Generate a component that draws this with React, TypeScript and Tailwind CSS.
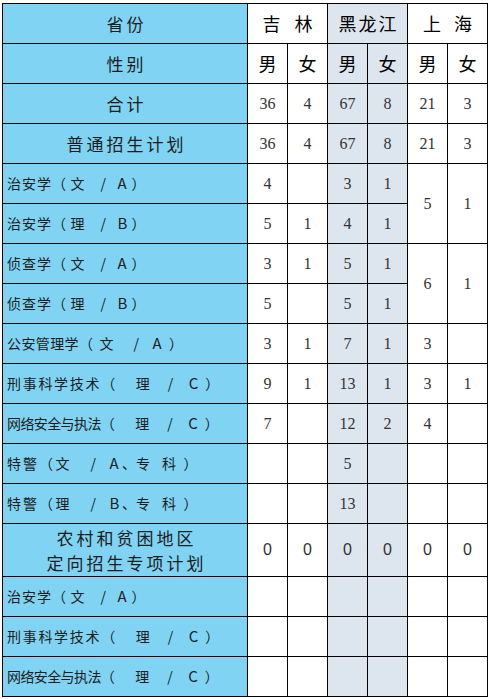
const LABEL_BG = "bg-[#80d3f3]";
const HLJ_BG = "bg-[#dde5ee]";

type Cell = string | null;
// paren tokens: [text, width in px]; the last one takes its own width
type Tok = [string, number];

const parenA: Tok[] = [["（", 18.5], ["文", 30], ["/", 17], ["A", 14], ["）", 0]];
const parenB: Tok[] = [["（", 18.5], ["理", 30], ["/", 17], ["B", 14], ["）", 0]];
const parenC: Tok[] = [["（", 34.5], ["理", 32], ["/", 21], ["C", 16.5], ["）", 0]];
const parenGA: Tok[] = [["（", 20.5], ["文", 34], ["/", 19], ["A", 16.5], ["）", 0]];
const parenTA: Tok[] = [["（", 16.5], ["文", 35], ["/", 19], ["A", 12.5], ["、", 14], ["专", 26], ["科", 21.5], ["）", 0]];
const parenTB: Tok[] = [["（", 16.5], ["理", 35], ["/", 19], ["B", 12.5], ["、", 14], ["专", 26], ["科", 21.5], ["）", 0]];

type Label = { name: string; track: string; paren: Tok[] };

const zhiA: Label = { name: "治安学", track: "tracking-[1px]", paren: parenA };
const xingC: Label = { name: "刑事科学技术", track: "tracking-[1.7px]", paren: parenC };
const wangC: Label = { name: "网络安全与执法", track: "tracking-[-0.6px]", paren: parenC };

const majors: { label: Label; cells: Cell[] }[] = [
  { label: zhiA, cells: ["4", "", "3", "1", "5", "1"] },
  { label: { name: "治安学", track: "tracking-[1px]", paren: parenB }, cells: ["5", "1", "4", "1", null, null] },
  { label: { name: "侦查学", track: "tracking-[1px]", paren: parenA }, cells: ["3", "1", "5", "1", "6", "1"] },
  { label: { name: "侦查学", track: "tracking-[1px]", paren: parenB }, cells: ["5", "", "5", "1", null, null] },
  { label: { name: "公安管理学", track: "tracking-[0.4px]", paren: parenGA }, cells: ["3", "1", "7", "1", "3", ""] },
  { label: xingC, cells: ["9", "1", "13", "1", "3", "1"] },
  { label: wangC, cells: ["7", "", "12", "2", "4", ""] },
  { label: { name: "特警", track: "tracking-[2px]", paren: parenTA }, cells: ["", "", "5", "", "", ""] },
  { label: { name: "特警", track: "tracking-[2px]", paren: parenTB }, cells: ["", "", "13", "", "", ""] },
];

const special: Label[] = [zhiA, xingC, wangC];

const cjk = "font-['Noto_Sans_CJK_SC',sans-serif]";
const serif = "font-['Liberation_Serif',serif]";

const td = "border border-black text-center align-middle p-0";

function RowLabel({ label }: { label: Label }) {
  return (
    <td className={`${td} ${LABEL_BG} text-left pl-[4px] text-[14px] text-[#1c1c1c] ${cjk} whitespace-nowrap`}>
      <span className={label.track}>{label.name}</span>
      {label.paren.map(([t, w], i) => (
        <span
          key={i}
          className={`inline-block ${/[A-C]/.test(t) ? "text-[15px]" : ""}`}
          style={w ? { width: `${w}px` } : undefined}
        >
          {t}
        </span>
      ))}
    </td>
  );
}

function HeadLabel({ children }: { children: React.ReactNode }) {
  return (
    <td className={`${td} ${LABEL_BG} pl-[3px] text-[17px] tracking-[3px] text-[#1c1c1c] ${cjk}`}>{children}</td>
  );
}

function Num({ v, i, rowSpan }: { v: string; i: number; rowSpan?: number }) {
  const bg = i === 2 || i === 3 ? HLJ_BG : "bg-white";
  return (
    <td rowSpan={rowSpan} className={`${td} ${bg} ${serif} text-[16px] text-[#333]`}>
      {v}
    </td>
  );
}

export default function App() {
  return (
    <div className="bg-white w-[491px] h-[699px] pl-[2px] pt-[3px]">
      <table className="border-collapse table-fixed w-[485px]">
        <colgroup>
          <col className="w-[245px]" />
          <col className="w-[40px]" />
          <col className="w-[40px]" />
          <col className="w-[40px]" />
          <col className="w-[40px]" />
          <col className="w-[40px]" />
          <col className="w-[40px]" />
        </colgroup>
        <tbody>
          <tr className="h-[40px]">
            <HeadLabel>省份</HeadLabel>
            <td colSpan={2} className={`${td} bg-white text-[18px] text-black ${cjk}`}>
              <span className="mr-[14px]">吉</span>林
            </td>
            <td colSpan={2} className={`${td} ${HLJ_BG} pl-[2px] text-[18px] tracking-[2px] text-black ${cjk}`}>
              黑龙江
            </td>
            <td colSpan={2} className={`${td} bg-white text-[18px] text-black ${cjk}`}>
              <span className="mr-[13px]">上</span>海
            </td>
          </tr>
          <tr className="h-[40px]">
            <HeadLabel>性别</HeadLabel>
            {["男", "女", "男", "女", "男", "女"].map((s, i) => (
              <td
                key={i}
                className={`${td} ${i === 2 || i === 3 ? HLJ_BG : "bg-white"} text-[18px] text-black ${cjk}`}
              >
                {s}
              </td>
            ))}
          </tr>
          <tr className="h-[40px]">
            <HeadLabel>合计</HeadLabel>
            {["36", "4", "67", "8", "21", "3"].map((v, i) => (
              <Num key={i} v={v} i={i} />
            ))}
          </tr>
          <tr className="h-[40px]">
            <HeadLabel>普通招生计划</HeadLabel>
            {["36", "4", "67", "8", "21", "3"].map((v, i) => (
              <Num key={i} v={v} i={i} />
            ))}
          </tr>
          {majors.map((m, r) => (
            <tr key={r} className="h-[40px]">
              <RowLabel label={m.label} />
              {m.cells.map((v, i) =>
                v === null ? null : (
                  <Num key={i} v={v} i={i} rowSpan={(r === 0 || r === 2) && i >= 4 ? 2 : undefined} />
                )
              )}
            </tr>
          ))}
          <tr className="h-[53px]">
            <td className={`${td} ${LABEL_BG} pl-[3px] text-[17px] leading-[25px] tracking-[3px] text-[#1c1c1c] ${cjk}`}>
              农村和贫困地区
              <br />
              定向招生专项计划
            </td>
            {[0, 1, 2, 3, 4, 5].map((i) => (
              <td
                key={i}
                className={`${td} ${i === 2 || i === 3 ? HLJ_BG : "bg-white"} font-['Liberation_Sans',sans-serif] text-[16px] text-[#333]`}
              >
                0
              </td>
            ))}
          </tr>
          {special.map((m, r) => (
            <tr key={r} className="h-[40px]">
              <RowLabel label={m} />
              {[0, 1, 2, 3, 4, 5].map((i) => (
                <Num key={i} v="" i={i} />
              ))}
            </tr>
          ))}
        </tbody>
      </table>
    </div>
  );
}
